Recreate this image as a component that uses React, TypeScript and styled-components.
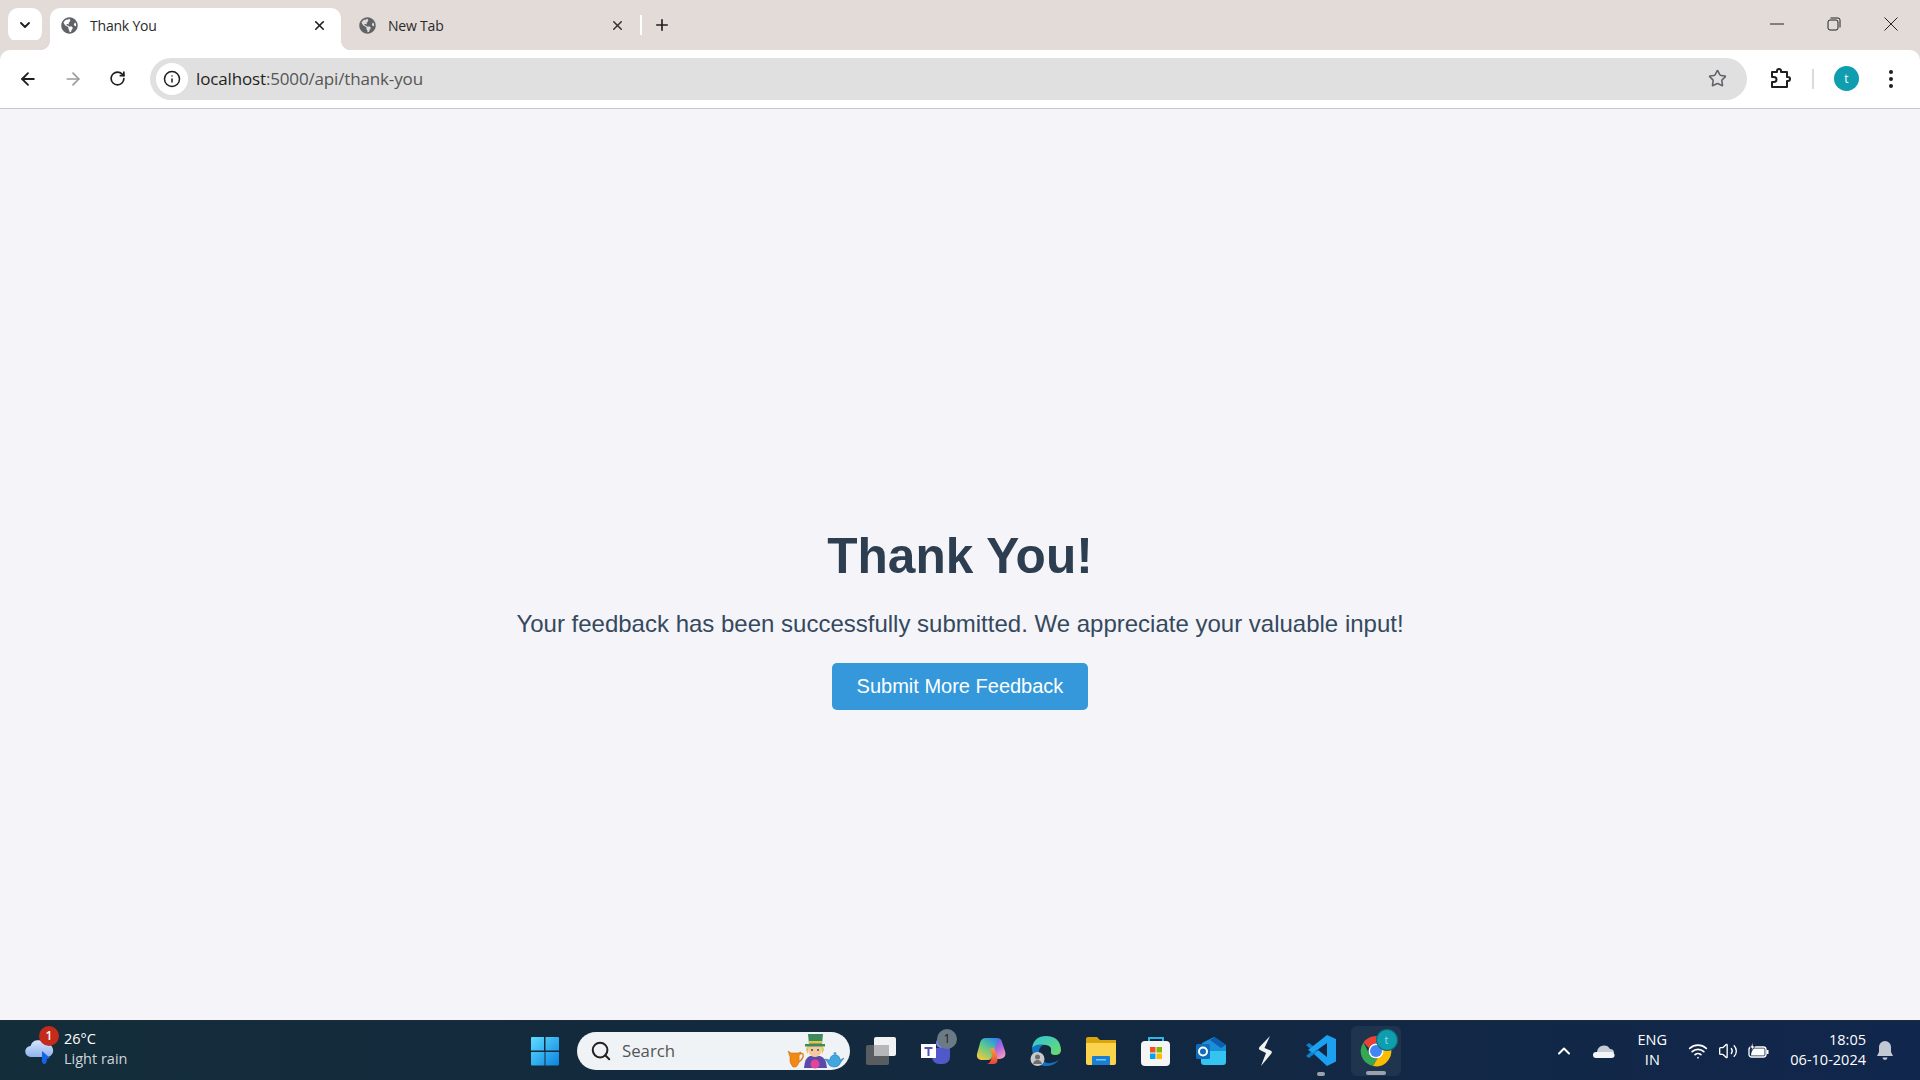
import styled, { createGlobalStyle } from "styled-components";
import { ArrowLeft, ArrowRight, ChevronDown, ChevronUp, Info, Plus, RotateCw, Search, Star, Volume2, Wifi, X } from "lucide-react";
import { FaGlobeAmericas } from "react-icons/fa";

const GlobalStyle = createGlobalStyle`
  html, body { margin: 0; padding: 0; height: 100%; overflow: hidden; }
  body { font-family: "Liberation Sans", Arial, sans-serif; background: #f4f4f9; }
  #root { height: 100%; }
`;

const Globe = () => <FaGlobeAmericas size={17} color="#5f6368" />;

const WindowsLogo = () => (
  <svg width="30" height="30" viewBox="0 0 30 30">
    <defs>
      <linearGradient id="win" x1="0" y1="0" x2="1" y2="1">
        <stop offset="0" stopColor="#5fdcff" />
        <stop offset="1" stopColor="#0a84e0" />
      </linearGradient>
    </defs>
    <path fill="url(#win)" d="M1 2q0-1 1-1h12v13.500H1zM15.500 1H28q1 0 1 1v12.500H15.500zM1 16h13.500v13.500H2q-1 0-1-1zM15.500 16H29v12.500q0 1-1 1H15.500z" />
  </svg>
);

const Doodle = () => (
  <svg width="58" height="36" viewBox="0 0 58 36">
    <path fill="none" stroke="#e07c10" strokeWidth="1.400" d="M13 21q4-2 3 3-1 3-4 5" />
    <path fill="#f08a12" stroke="#c85f08" strokeWidth="0.500" d="M1 18l3 2h7l3-1-2 4q1 8-3 11H6q-4-4-3-10z" />
    <path fill="#3fa6de" stroke="#1c6fa8" strokeWidth="0.500" d="M43 27q0-5 5-5t5 5l4-2-3 4q-2 5-6 5-6 0-7-4l-3-4z" />
    <rect x="46.500" y="19" width="3" height="3" rx="1.500" fill="#3fa6de" />
    <path fill="#5c4aa8" d="M17 35q1-11 6-12h10q6 1 7 12z" />
    <circle cx="28" cy="31" r="4.500" fill="#e0459b" />
    <path fill="#f4c9a0" d="M22 13h12v7q-2 4-6 4t-6-4z" />
    <circle cx="25" cy="17" r="1" fill="#27506b" />
    <circle cx="31" cy="17" r="1" fill="#27506b" />
    <path fill="#e6c34d" d="M19 17q0-3 3-4l-1 8zM37 17q0-3-3-4l1 8z" />
    <path fill="#3d8a5a" d="M21 1h15l-1 10h3v2.500H18V11h4z" />
    <rect x="22" y="8" width="13" height="2.500" fill="#e6c34d" />
  </svg>
);

const TaskView = () => (
  <svg width="32" height="30" viewBox="0 0 32 30">
    <rect x="1" y="9" width="23" height="20" rx="2" fill="#5a5d5f" />
    <rect x="9" y="1" width="22" height="19" rx="2" fill="#f2f2f2" />
    <rect x="9" y="9" width="15" height="11" fill="#b5b7b8" />
  </svg>
);

const Teams = () => (
  <svg width="30" height="28" viewBox="0 0 30 28">
    <circle cx="20" cy="6" r="5" fill="#7b83eb" />
    <path fill="#5059c9" d="M11 11h18v9a7 7 0 0 1-7 7h-4a7 7 0 0 1-7-7z" />
    <rect x="0" y="7" width="15" height="14" fill="#fff" />
    <path fill="#4b53bc" d="M3.500 10h8v2h-3v7h-2v-7h-3z" />
  </svg>
);

const Copilot = () => (
  <svg width="30" height="28" viewBox="0 0 30 28">
    <defs>
      <linearGradient id="copA" x1="0.800" y1="0" x2="0.200" y2="1">
        <stop offset="0" stopColor="#2a8fe8" />
        <stop offset="0.45" stopColor="#5cc98c" />
        <stop offset="1" stopColor="#f7c93a" />
      </linearGradient>
      <linearGradient id="copB" x1="0.300" y1="0" x2="0.700" y2="1">
        <stop offset="0" stopColor="#3f6fe8" />
        <stop offset="0.5" stopColor="#b566e0" />
        <stop offset="1" stopColor="#f4a0b8" />
      </linearGradient>
      <linearGradient id="copC" x1="0" y1="0" x2="0" y2="1">
        <stop offset="0" stopColor="#f8a23a" />
        <stop offset="1" stopColor="#e8443a" />
      </linearGradient>
    </defs>
    <path fill="url(#copB)" d="M18 1h3q4 0 5 4l3 9q2 7-5 8h-8z" />
    <path fill="url(#copA)" d="M10 1h9q3 0 2 3l-5 16q-1 3-4 3H5q-5-1-4-6l3-11q1-5 6-5z" />
    <path fill="url(#copC)" d="M13 12l5-1 3 8q2 7-3 8h-7q3-1 4-4l1-5q0-3-3-6z" />
  </svg>
);

const Edge = () => (
  <svg width="32" height="32" viewBox="0 0 32 32">
    <defs>
      <linearGradient id="edgeA" x1="0" y1="0" x2="1" y2="1">
        <stop offset="0" stopColor="#2fc4d8" />
        <stop offset="1" stopColor="#6fdc6a" />
      </linearGradient>
    </defs>
    <path fill="url(#edgeA)" d="M2 13Q4 1 16 1q14 0 15 14 0 5-6 5-5 0-4-4 1-5-5-6Q7 9 2 13z" />
    <path fill="#1274c4" d="M2 13q5-5 11-3-5 3-4 9 1 7 8 9 6 1 12-3-5 6-13 6Q3 31 2 13z" />
    <circle cx="7.500" cy="24" r="7" fill="#c9c9c9" />
    <circle cx="7.500" cy="22" r="2.500" fill="#6d6d6d" />
    <path fill="#6d6d6d" d="M3 29q1-4 4.500-4t4.500 4z" />
  </svg>
);

const Folder = () => (
  <svg width="30" height="28" viewBox="0 0 30 28">
    <path fill="#d9a40e" d="M0 2q0-2 2-2h9l3 3h16v6H0z" />
    <path fill="#fcd34d" d="M0 6h30v20q0 2-2 2H2q-2 0-2-2z" />
    <path fill="#1b7fd1" d="M6 20q0-1 1-1h16q1 0 1 1v8H6z" />
    <rect x="10" y="22" width="10" height="1.500" fill="#7cc4f5" />
  </svg>
);

const Store = () => (
  <svg width="30" height="30" viewBox="0 0 30 30">
    <path fill="none" stroke="#29b6e8" strokeWidth="2" d="M8 6V2h14v4" />
    <rect x="0" y="5" width="29" height="25" rx="4" fill="#f5f5f5" />
    <rect x="9" y="11" width="5.500" height="5.500" fill="#f25022" />
    <rect x="15.500" y="11" width="5.500" height="5.500" fill="#7fba00" />
    <rect x="9" y="17.500" width="5.500" height="5.500" fill="#00a4ef" />
    <rect x="15.500" y="17.500" width="5.500" height="5.500" fill="#ffb900" />
  </svg>
);

const Outlook = () => (
  <svg width="30" height="28" viewBox="0 0 30 28">
    <path fill="#1a8fd8" d="M6 6l12-6 12 8v6H6z" />
    <path fill="#0c5fb0" d="M14 3l5-3 11 8-5 3z" />
    <path fill="#35c4f0" d="M5 14h25v11q0 3-3 3H8q-3 0-3-3z" />
    <rect x="0" y="7" width="14" height="15" rx="1.500" fill="#0f6cbd" />
    <circle cx="7" cy="14.500" r="4" fill="none" stroke="#fff" strokeWidth="2" />
  </svg>
);

const Bolt = () => (
  <svg width="16" height="30" viewBox="0 0 16 30">
    <path fill="#f2f2f2" d="M12 0L1.500 11Q0 13 2 14l6 3-5 13 10-12q2-2-.5-3.500L6.500 12z" />
  </svg>
);

const VsCode = () => (
  <svg width="31" height="31" viewBox="0 0 31 31">
    <path fill="#0e7fcc" d="M1 10l3-2 8 6-3 3zM1 21l3 2 8-6-3-3z" />
    <path fill="#1ba1f0" d="M22 0l9 4q0 0 0 1v21q0 1-1 1l-8 4-13-12 4-4 9 7V8l-14 10-5-3z" />
  </svg>
);

const Chrome = () => (
  <svg width="32" height="32" viewBox="0 0 32 32">
    <path fill="#ea4335" d="M16 1a15 15 0 0 1 13 7.500H16a7.500 7.500 0 0 0-7 4.500L3.500 7.500A15 15 0 0 1 16 1z" />
    <path fill="#34a853" d="M3.500 7.500L9.500 19.500a7.500 7.500 0 0 0 8 4L13 31A15 15 0 0 1 3.500 7.500z" />
    <path fill="#fbbc04" d="M29 8.500A15 15 0 0 1 13 31l6.500-11a7.500 7.500 0 0 0 0-11.500z" />
    <circle cx="16" cy="16" r="7.500" fill="#fff" />
    <circle cx="16" cy="16" r="6" fill="#4285f4" />
  </svg>
);

const Weather = () => (
  <svg width="30" height="30" viewBox="0 0 30 30">
    <defs>
      <linearGradient id="cloud" x1="0" y1="0" x2="0" y2="1">
        <stop offset="0" stopColor="#d8e6fb" />
        <stop offset="1" stopColor="#8fb2ee" />
      </linearGradient>
    </defs>
    <path fill="url(#cloud)" d="M6 21a5.500 5.500 0 0 1-.5-11A8 8 0 0 1 20 8a6.500 6.500 0 0 1 3 13z" />
    <path fill="#1763e8" d="M17 15l8 7-3 1q0 5-3 5-3-1-2-5z" />
  </svg>
);

const OneDrive = () => (
  <svg width="22" height="14" viewBox="0 0 22 14">
    <path fill="#c6ccd2" d="M4 8a7 7 0 0 1 13-3 4 4 0 0 1 4 4z" />
    <path fill="#f4f5f6" d="M3 14a3 3 0 0 1 0-6h15a3 3 0 0 1 1 6z" />
  </svg>
);

const Battery = () => (
  <svg width="21" height="18" viewBox="0 0 21 18" fill="none" stroke="#fff" strokeWidth="1.300">
    <rect x="1" y="5" width="17" height="10" rx="2.500" />
    <path fill="#fff" stroke="none" d="M4 6.500h12.500v7H3zM18.500 8h2v4h-2z" />
    <path fill="#fff" stroke="#12264a" strokeWidth="0.800" d="M5 0L2 6h2l-1 4 4-6H5z" />
  </svg>
);

const Bell = () => (
  <svg width="18" height="20" viewBox="0 0 18 20">
    <path fill="#c3c9d2" d="M9 0a6 6 0 0 1 6 6v5l2 4H1l2-4V6a6 6 0 0 1 6-6zM6.500 16.500h5a2.500 2.500 0 0 1-5 0z" />
  </svg>
);

const PuzzleIcon = () => (
  <svg width="22" height="22" viewBox="0 0 22 22" fill="none" stroke="#1f1f1f" strokeWidth="2" strokeLinejoin="round">
    <path d="M2 4h5V3a2 2 0 0 1 4 0v1h6v5h1a2 2 0 0 1 0 4h-1v6H2v-5h2a2.500 2.500 0 0 0 0-5H2z" />
  </svg>
);

const taskItems = [
  { id: "view", icon: <TaskView /> },
  { id: "teams", icon: <Teams />, badge: "1" },
  { id: "copilot", icon: <Copilot /> },
  { id: "edge", icon: <Edge /> },
  { id: "files", icon: <Folder /> },
  { id: "store", icon: <Store /> },
  { id: "outlook", icon: <Outlook /> },
  { id: "bolt", icon: <Bolt /> },
  { id: "vscode", icon: <VsCode />, dot: true },
  { id: "chrome", icon: <Chrome />, active: true, avatar: true },
];

export default function App() {
  return (
    <>
      <GlobalStyle />
      <Screen>
        <TabStrip>
          <TabSearch>
            <ChevronDown size={16} strokeWidth={2.8} color="#1f1f1f" />
          </TabSearch>
          <Tab $active>
            <Globe />
            <TabTitle>Thank You</TabTitle>
            <X size={15} strokeWidth={2.6} color="#1f1f1f" />
          </Tab>
          <Tab>
            <Globe />
            <TabTitle>New Tab</TabTitle>
            <X size={15} strokeWidth={2.4} color="#333" />
          </Tab>
          <TabDivider />
          <NewTab>
            <Plus size={18} strokeWidth={2.2} color="#1f1f1f" />
          </NewTab>
          <WindowControls>
            <WindowButton>
              <svg width="14" height="2" viewBox="0 0 14 2"><path d="M0 1h14" stroke="#222" strokeWidth="1" /></svg>
            </WindowButton>
            <WindowButton>
              <svg width="14" height="14" viewBox="0 0 14 14" fill="none" stroke="#222" strokeWidth="1">
                <rect x="1" y="3" width="10" height="10" rx="2" />
                <path d="M3.500 1H11a2 2 0 0 1 2 2v7.500" />
              </svg>
            </WindowButton>
            <WindowButton>
              <svg width="14" height="14" viewBox="0 0 14 14" stroke="#222" strokeWidth="1"><path d="M.5.500l13 13M13.500.500l-13 13" /></svg>
            </WindowButton>
          </WindowControls>
        </TabStrip>

        <Toolbar>
          <NavIcon><ArrowLeft size={20} strokeWidth={2.2} color="#1f1f1f" /></NavIcon>
          <NavIcon><ArrowRight size={20} strokeWidth={2} color="#9a9a9a" /></NavIcon>
          <NavIcon><RotateCw size={17} strokeWidth={2.4} color="#1f1f1f" /></NavIcon>
          <Omnibox>
            <SiteInfo><Info size={18} strokeWidth={2} color="#1f1f1f" /></SiteInfo>
            <Url>localhost<UrlPath>:5000/api/thank-you</UrlPath></Url>
            <Star size={19} strokeWidth={2} color="#5f6368" />
          </Omnibox>
          <ToolbarEnd>
            <PuzzleIcon />
            <ToolbarDivider />
            <Avatar>t</Avatar>
            <Dots><Dot /><Dot /><Dot /></Dots>
          </ToolbarEnd>
        </Toolbar>

        <Page>
          <Title>Thank You!</Title>
          <Message>Your feedback has been successfully submitted. We appreciate your valuable input!</Message>
          <SubmitButton>Submit More Feedback</SubmitButton>
        </Page>

        <Taskbar>
          <WeatherWidget>
            <WeatherIcon>
              <Weather />
              <WeatherBadge>1</WeatherBadge>
            </WeatherIcon>
            <WeatherText>
              <span>26°C</span>
              <WeatherNote>Light rain</WeatherNote>
            </WeatherText>
          </WeatherWidget>

          <TaskCenter>
            <TaskSlot><WindowsLogo /></TaskSlot>
            <SearchBox>
              <Search size={22} strokeWidth={2.2} color="#222" />
              <SearchLabel>Search</SearchLabel>
              <Doodle />
            </SearchBox>
            {taskItems.map((item) => (
              <TaskSlot key={item.id} $active={item.active}>
                {item.icon}
                {item.badge && <TaskBadge>{item.badge}</TaskBadge>}
                {item.avatar && <ChromeAvatar>t</ChromeAvatar>}
                {item.dot && <RunDot />}
                {item.active && <RunBar />}
              </TaskSlot>
            ))}
          </TaskCenter>

          <Tray>
            <TrayIcon><ChevronUp size={20} strokeWidth={2.4} color="#fff" /></TrayIcon>
            <TrayIcon><OneDrive /></TrayIcon>
            <Lang>ENG<br />IN</Lang>
            <TrayGroup>
              <Wifi size={20} strokeWidth={2} color="#fff" />
              <Volume2 size={20} strokeWidth={1.6} color="#fff" />
              <Battery />
            </TrayGroup>
            <Clock>18:05<br />06-10-2024</Clock>
            <BellSlot><Bell /></BellSlot>
          </Tray>
        </Taskbar>
      </Screen>
    </>
  );
}

const Screen = styled.div`
  display: flex;
  flex-direction: column;
  height: 1080px;
  background: #f4f4f9;
`;

const TabStrip = styled.div`
  display: flex;
  align-items: flex-end;
  height: 50px;
  padding-left: 8px;
  background: #e3dbd8;
  flex: none;
`;

const TabSearch = styled.div`
  display: flex;
  align-items: center;
  justify-content: center;
  width: 34px;
  height: 34px;
  margin-bottom: 8px;
  margin-right: 8px;
  background: #fff;
  border-radius: 10px;
`;

const Tab = styled.div<{ $active?: boolean }>`
  position: relative;
  display: flex;
  align-items: center;
  box-sizing: border-box;
  width: 291px;
  height: 42px;
  padding: 0 14px 8px 11px;
  margin-right: ${(p) => (p.$active ? "7px" : "0")};
  border-radius: 10px 10px 0 0;
  background: ${(p) => (p.$active ? "#fff" : "transparent")};
  flex: none;

  ${(p) =>
    p.$active &&
    `
    &::before, &::after {
      content: "";
      position: absolute;
      bottom: 0;
      width: 10px;
      height: 10px;
    }
    &::before {
      left: -10px;
      background: radial-gradient(circle at 0 0, #e3dbd8 10px, #fff 10.5px);
    }
    &::after {
      right: -10px;
      background: radial-gradient(circle at 100% 0, #e3dbd8 10px, #fff 10.5px);
    }
  `}
`;

const TabTitle = styled.span`
  flex: 1;
  margin-left: 12px;
  font-family: "Open Sans", sans-serif;
  font-size: 14px;
  letter-spacing: -0.2px;
  color: #2a2a2a;
`;

const TabDivider = styled.div`
  width: 2px;
  height: 20px;
  margin: 0 0 15px 1px;
  background: #fff;
`;

const NewTab = styled.div`
  display: flex;
  align-items: center;
  justify-content: center;
  width: 28px;
  height: 28px;
  margin: 0 0 11px 6px;
`;

const WindowControls = styled.div`
  display: flex;
  align-self: stretch;
  margin-left: auto;
  padding-right: 1px;
`;

const WindowButton = styled.div`
  display: flex;
  align-items: center;
  justify-content: center;
  width: 57px;
  height: 48px;
`;

const Toolbar = styled.div`
  display: flex;
  align-items: center;
  box-sizing: border-box;
  height: 59px;
  padding: 0 6px 1px 5px;
  background: #fff;
  border-bottom: 1px solid #c9c9cc;
  border-radius: 10px 10px 0 0;
  flex: none;
  box-shadow: 0 -10px 0 #e3dbd8;
`;

const NavIcon = styled.div`
  display: flex;
  align-items: center;
  justify-content: center;
  width: 45px;
`;

const Omnibox = styled.div`
  display: flex;
  align-items: center;
  box-sizing: border-box;
  width: 1597px;
  height: 42px;
  margin-left: 10px;
  padding: 0 20px 0 6px;
  background: #e0e0e0;
  border-radius: 21px;
`;

const SiteInfo = styled.div`
  display: flex;
  align-items: center;
  justify-content: center;
  width: 32px;
  height: 32px;
  border-radius: 50%;
  background: #fff;
`;

const Url = styled.div`
  flex: 1;
  margin-left: 8px;
  font-family: "Open Sans", sans-serif;
  font-size: 17px;
  letter-spacing: -0.15px;
  color: #1f1f1f;
`;

const UrlPath = styled.span`
  color: #555;
`;

const ToolbarEnd = styled.div`
  display: flex;
  align-items: center;
  flex: 1;
  padding-left: 23px;
`;

const ToolbarDivider = styled.div`
  width: 2px;
  height: 20px;
  margin: 0 20px 0 20px;
  background: #e0d9d6;
`;

const Avatar = styled.div`
  display: flex;
  align-items: center;
  justify-content: center;
  width: 25px;
  height: 25px;
  border-radius: 50%;
  background: #0f9db0;
  color: #fff;
  font-family: "Open Sans", sans-serif;
  font-size: 12px;
`;

const Dots = styled.div`
  display: flex;
  flex-direction: column;
  gap: 3px;
  margin-left: 30px;
`;

const Dot = styled.div`
  width: 4px;
  height: 4px;
  border-radius: 50%;
  background: #1f1f1f;
`;

const Page = styled.main`
  display: flex;
  flex-direction: column;
  align-items: center;
  flex: 1;
  min-height: 0;
  padding-top: 420px;
  background: #f4f4f9;
  color: #2c3e50;
`;

const Title = styled.h1`
  margin: 0 0 26px;
  font-size: 49.6px;
  line-height: 55px;
  font-weight: 700;
`;

const Message = styled.p`
  margin: 0 0 26px;
  font-size: 24px;
  line-height: 27px;
  color: #34495e;
`;

const SubmitButton = styled.button`
  width: 256px;
  height: 47px;
  padding: 0;
  border: none;
  border-radius: 5px;
  background: #3498db;
  color: #fff;
  font-family: "Liberation Sans", Arial, sans-serif;
  font-size: 20px;
  cursor: pointer;
`;

const Taskbar = styled.footer`
  display: grid;
  grid-template-columns: 517px auto 1fr;
  align-items: center;
  height: 60px;
  flex: none;
  background: linear-gradient(90deg, #142d3a 0%, #12293f 50%, #11264c 100%);
  border-top: 1px solid #1e2d35;
  box-sizing: border-box;
  color: #fff;
  font-family: "Open Sans", sans-serif;
`;

const WeatherWidget = styled.div`
  display: flex;
  align-items: center;
  padding-left: 25px;
`;

const WeatherIcon = styled.div`
  position: relative;
  display: flex;
  width: 39px;
`;

const WeatherBadge = styled.span`
  position: absolute;
  top: -10px;
  left: 14px;
  width: 20px;
  height: 20px;
  border-radius: 50%;
  background: #c42b1c;
  color: #fff;
  font-size: 12px;
  font-weight: 600;
  line-height: 20px;
  text-align: center;
`;

const WeatherText = styled.div`
  display: flex;
  flex-direction: column;
  padding-bottom: 3px;
  font-size: 14.5px;
  line-height: 20px;
`;

const WeatherNote = styled.span`
  color: #cfd6da;
`;

const TaskCenter = styled.div`
  display: flex;
  align-items: center;
`;

const TaskSlot = styled.div<{ $active?: boolean }>`
  position: relative;
  display: flex;
  align-items: center;
  justify-content: center;
  box-sizing: border-box;
  width: ${(p) => (p.$active ? "50px" : "55px")};
  height: 50px;
  margin: ${(p) => (p.$active ? "0 2.5px" : "0")};
  border-radius: 6px;
  background: ${(p) => (p.$active ? "rgba(255,255,255,0.06)" : "transparent")};
`;

const SearchBox = styled.div`
  display: flex;
  align-items: center;
  box-sizing: border-box;
  width: 273px;
  height: 38px;
  margin: 0 3px 0 5px;
  padding: 0 5px 0 13px;
  border-radius: 19px;
  background: #f0f3f5;
`;

const SearchLabel = styled.span`
  flex: 1;
  margin-left: 10px;
  font-size: 16.8px;
  color: #555;
`;

const TaskBadge = styled.span`
  position: absolute;
  top: 3px;
  right: 6px;
  width: 20px;
  height: 20px;
  border-radius: 50%;
  background: #6c7a84;
  color: #1b1b1b;
  font-size: 12px;
  line-height: 20px;
  text-align: center;
`;

const ChromeAvatar = styled.span`
  position: absolute;
  top: 4px;
  right: 4px;
  width: 20px;
  height: 20px;
  border-radius: 50%;
  background: #0f9db0;
  box-shadow: 0 0 0 1px #0b6e7c;
  color: #8fdde6;
  font-size: 11px;
  line-height: 20px;
  text-align: center;
`;

const RunDot = styled.span`
  position: absolute;
  bottom: 0;
  left: 24px;
  width: 8px;
  height: 4px;
  border-radius: 2px;
  background: #9aa3a9;
`;

const RunBar = styled.span`
  position: absolute;
  bottom: 1px;
  left: 15px;
  width: 20px;
  height: 4px;
  border-radius: 2px;
  background: #9aa3a9;
`;

const Tray = styled.div`
  display: flex;
  align-items: center;
  justify-content: flex-end;
  padding-right: 26px;
`;

const TrayIcon = styled.div`
  display: flex;
  align-items: center;
  justify-content: center;
  width: 40px;
`;

const Lang = styled.div`
  width: 56px;
  padding-bottom: 2px;
  font-size: 14.5px;
  line-height: 20px;
  text-align: center;
`;

const TrayGroup = styled.div`
  display: flex;
  align-items: center;
  gap: 10px;
  margin-left: 8px;
`;

const Clock = styled.div`
  margin-left: 21px;
  padding-bottom: 2px;
  font-size: 14.5px;
  line-height: 20px;
  text-align: right;
`;

const BellSlot = styled.div`
  display: flex;
  margin-left: 10px;
`;
